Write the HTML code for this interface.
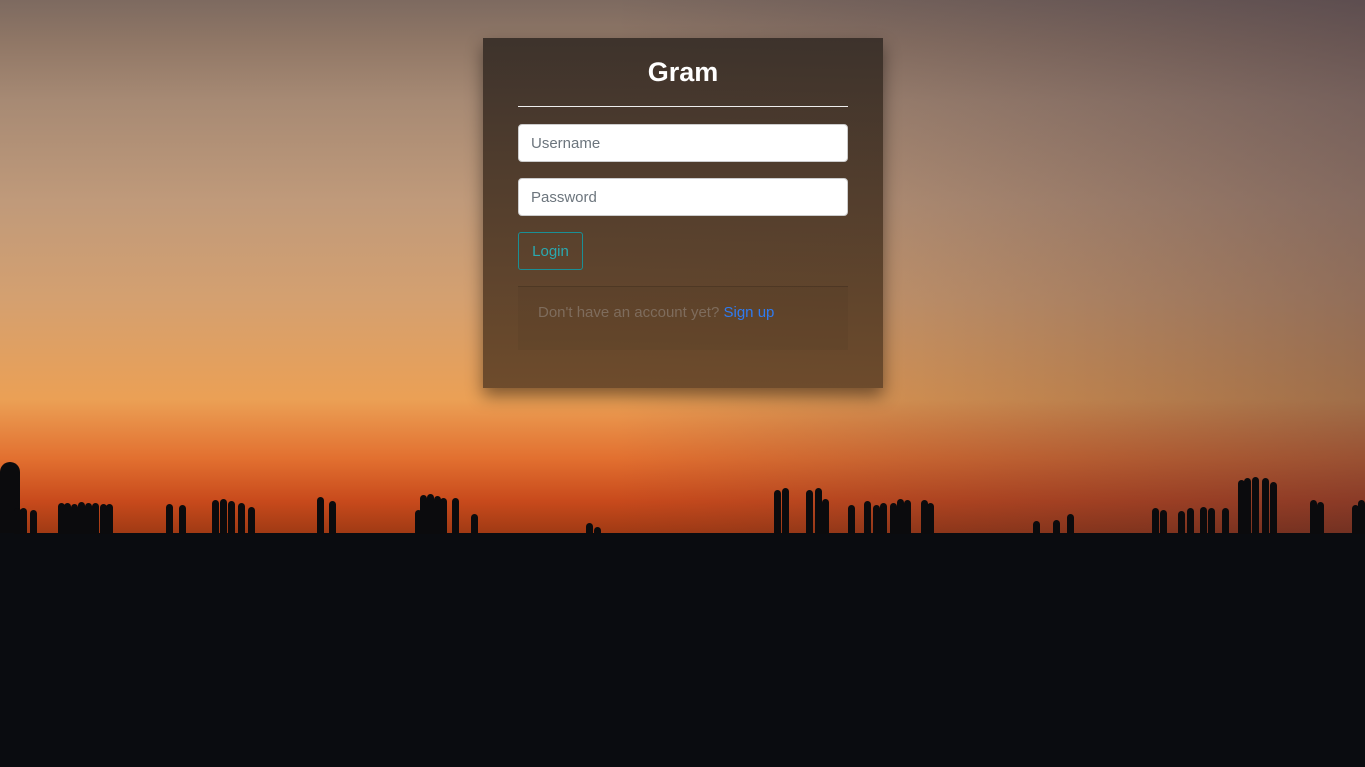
<!DOCTYPE html>
<html><head><meta charset="utf-8"><style>
html,body{margin:0;padding:0;width:1365px;height:767px;overflow:hidden;font-family:"Liberation Sans",sans-serif;background:#0a0c10;}
.sky{position:absolute;left:0;top:0;width:1365px;height:533px;background:
linear-gradient(90deg,rgba(0,0,0,0) 0%,rgba(0,0,0,0) 45%,rgba(45,35,55,0.4) 100%),
linear-gradient(180deg,#7d6a60 0%,#907766 8%,#a78a74 19%,#c09a7a 38%,#d4a070 56%,#eba055 75%,#e27030 86%,#c84a1c 94%,#a03a14 100%);}
.sil{position:absolute;background:#0b0b0d;border-radius:4px 4px 0 0;width:7px;}
.card{position:absolute;left:483px;top:38px;width:400px;height:350px;background:linear-gradient(180deg,rgba(58,48,42,0.96),rgba(105,72,42,0.96));box-shadow:0 8px 16px rgba(0,0,0,0.45);}
h1{position:absolute;left:0;width:400px;top:19px;margin:0;text-align:center;color:#fff;font-size:27px;font-weight:bold;}
.hr{position:absolute;left:35px;top:68px;width:330px;height:1px;background:#eee;}
.in{position:absolute;left:35px;background:#fff;border:1px solid #ccc;border-radius:4px;color:#6c757d;font-size:15px;line-height:38px;padding-left:12px;box-sizing:border-box;width:330px;height:38px;}
.btn{position:absolute;left:35px;top:194px;width:65px;height:38px;border:1px solid #1a8f95;border-radius:3px;box-sizing:border-box;color:#2aa9b0;font-size:15px;line-height:38px;text-align:center;}
.foot{position:absolute;left:35px;top:248px;width:330px;height:63px;border-top:1px solid rgba(0,0,0,0.15);background:rgba(0,0,0,0.04);}
.foot p{margin:0;position:absolute;left:20px;top:17px;font-size:15px;color:#7e6c5c;}
.foot a{color:#2f7bf0;}
</style></head><body>
<div class="sky"></div>
<div class="sil" style="left:0;top:462px;width:20px;height:71px;border-radius:10px 10px 0 0"></div>
<div id="people"></div>
<script>
var xs=[[14,508],[20,508],[30,510],[58,503],[64,503],[71,504],[78,502],[85,503],[92,503],[100,504],[106,504],[166,504],[179,505],[212,500],[220,499],[228,501],[238,503],[248,507],[317,497],[329,501],[415,510],[420,495],[427,494],[434,496],[440,498],[452,498],[471,514],[586,523],[594,527],[774,490],[782,488],[806,490],[815,488],[822,499],[848,505],[864,501],[873,505],[880,503],[890,503],[897,499],[904,500],[921,500],[927,503],[1033,521],[1053,520],[1067,514],[1152,508],[1160,510],[1178,511],[1187,508],[1200,507],[1208,508],[1222,508],[1238,480],[1244,478],[1252,477],[1262,478],[1270,482],[1310,500],[1317,502],[1352,505],[1358,500]];
var h='';xs.forEach(function(p){h+='<div class="sil" style="left:'+p[0]+'px;top:'+p[1]+'px;height:'+(534-p[1])+'px"></div>';});
document.getElementById('people').innerHTML=h;
</script>
<div class="card">
<h1>Gram</h1>
<div class="hr"></div>
<div class="in" style="top:86px">Username</div>
<div class="in" style="top:140px">Password</div>
<div class="btn">Login</div>
<div class="foot"><p>Don't have an account yet? <a>Sign up</a></p></div>
</div>
</body></html>
